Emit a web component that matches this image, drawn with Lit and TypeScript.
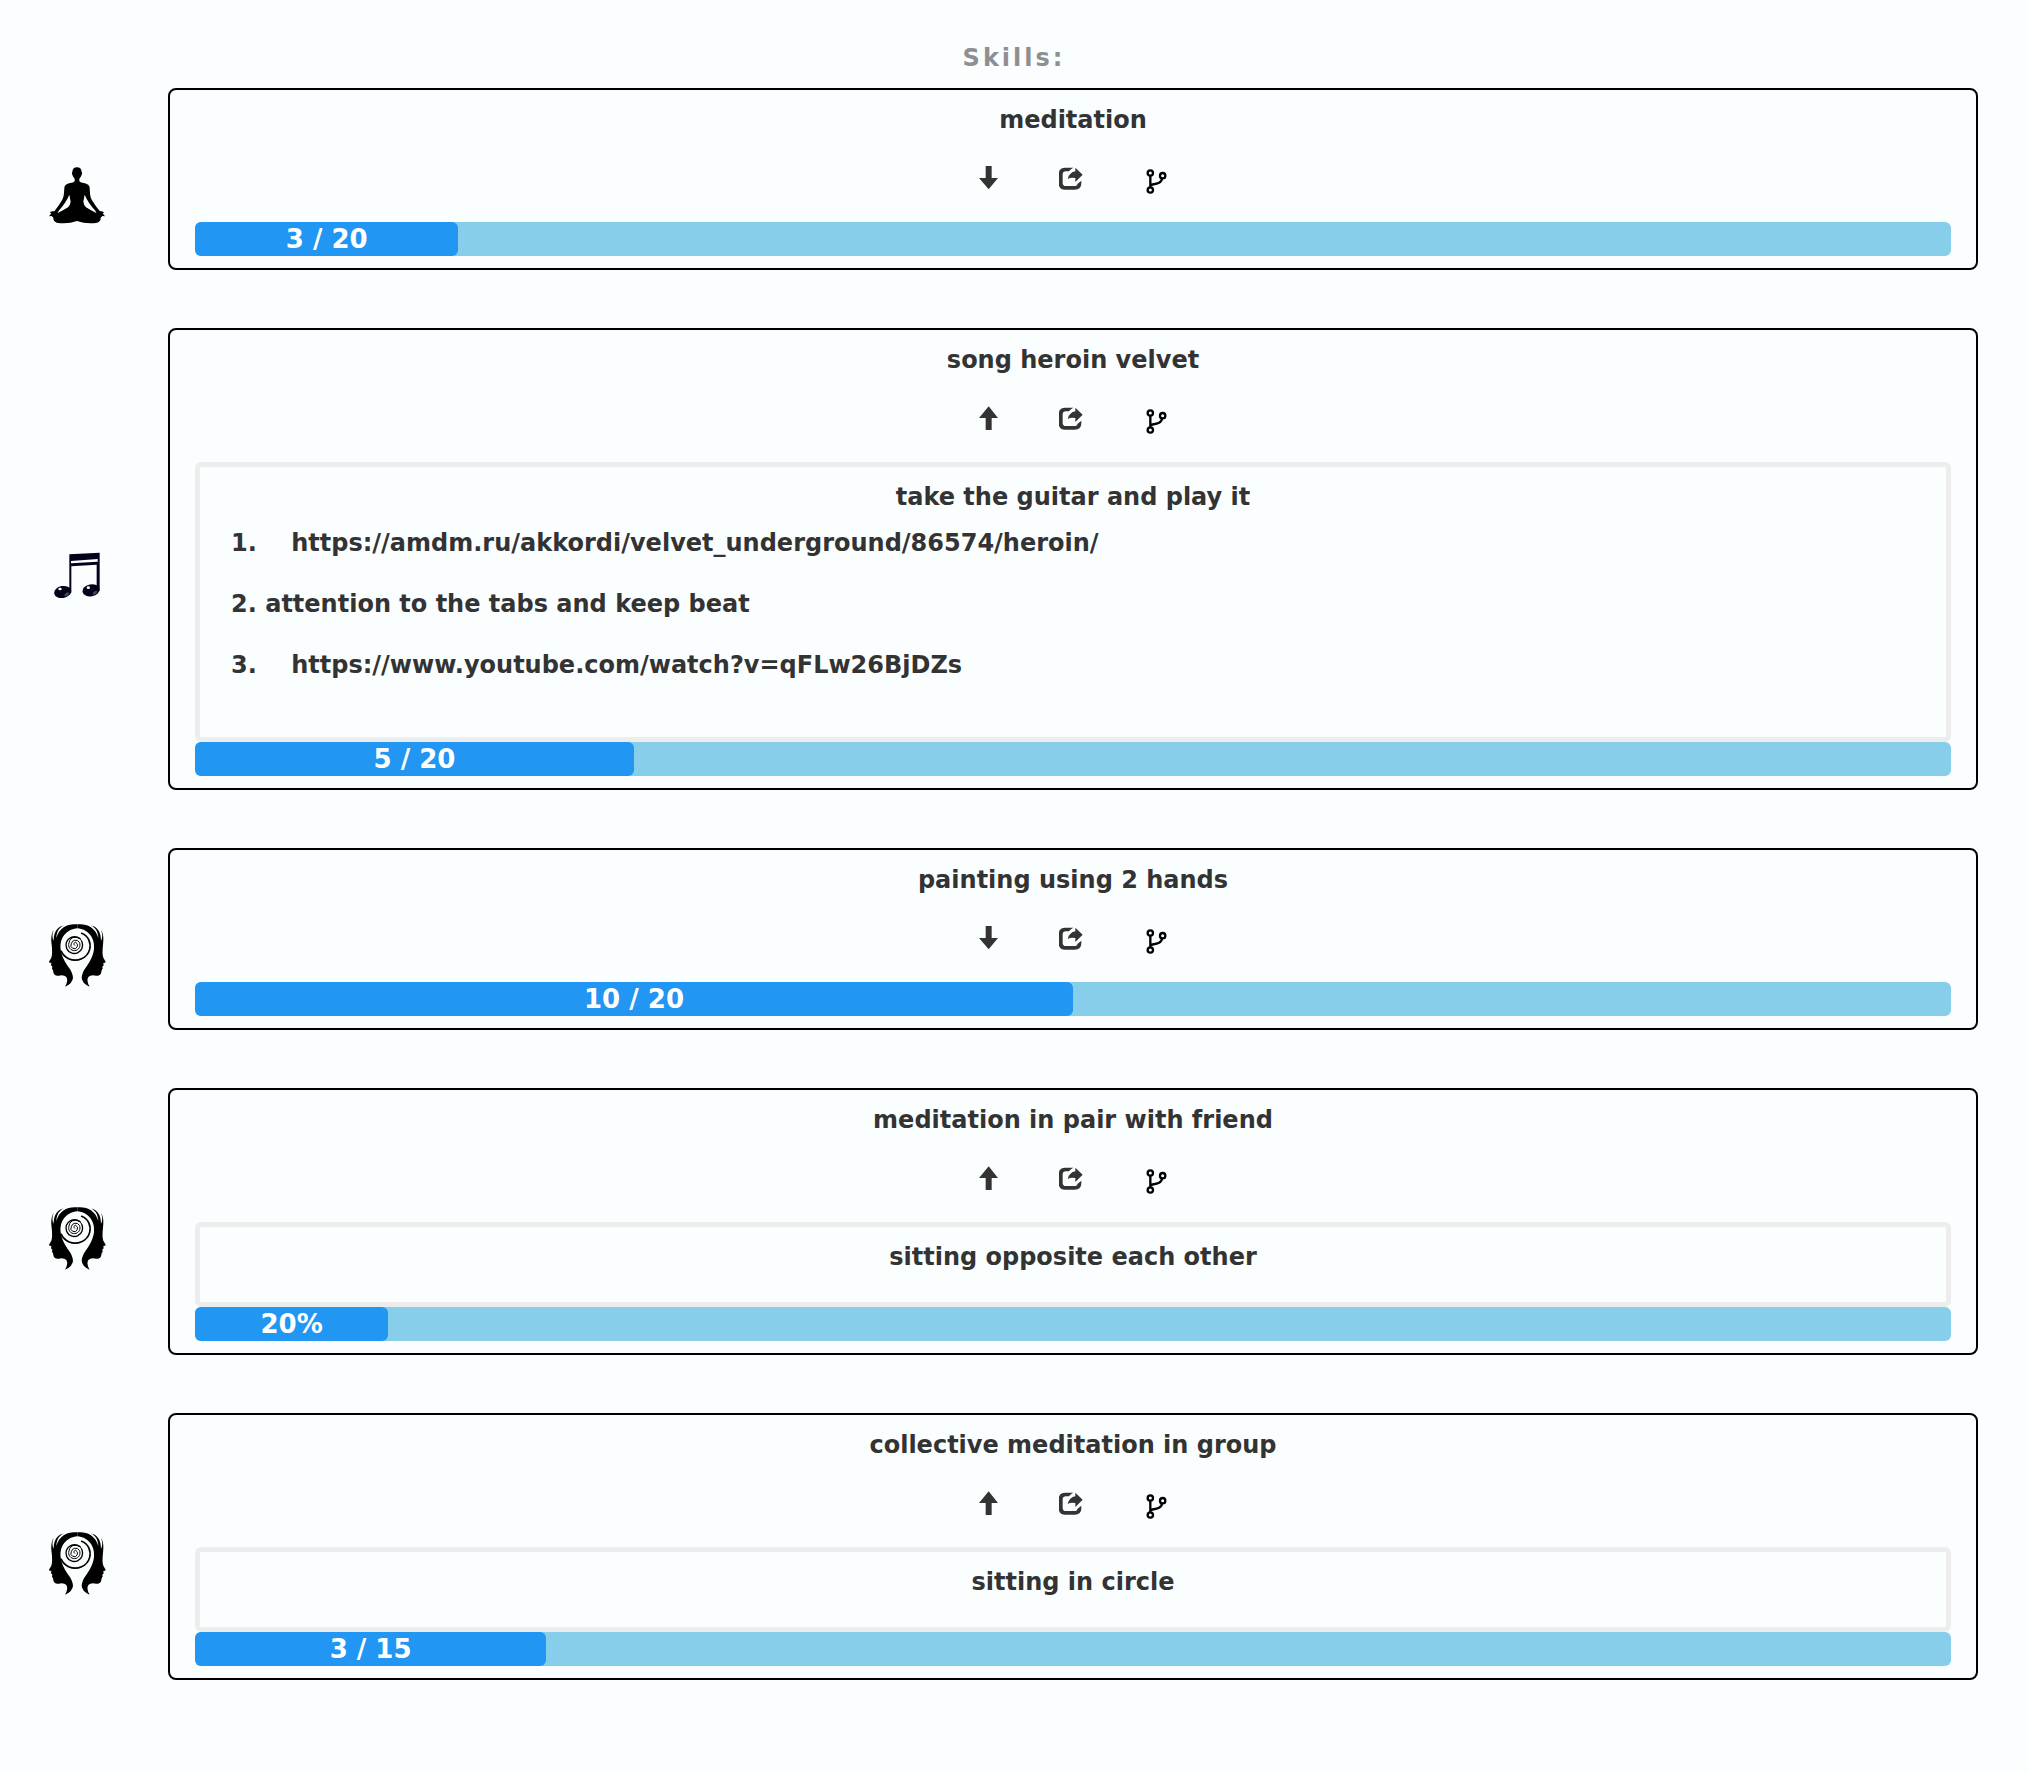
import { LitElement, html, css, svg, nothing } from 'lit';
import { customElement, property } from 'lit/decorators.js';

type Picture = 'lotus' | 'music' | 'mind';

interface Step {
  text: string;
  link?: boolean;
}

interface Skill {
  name: string;
  picture: Picture;
  progress: string;
  percent: number;
  note?: string;
  steps?: Step[];
}

const SKILLS: Skill[] = [
  { name: 'meditation', picture: 'lotus', progress: '3 / 20', percent: 15 },
  {
    name: 'song heroin velvet',
    picture: 'music',
    progress: '5 / 20',
    percent: 25,
    note: 'take the guitar and play it',
    steps: [
      { text: 'https://amdm.ru/akkordi/velvet_underground/86574/heroin/', link: true },
      { text: 'attention to the tabs and keep beat' },
      { text: 'https://www.youtube.com/watch?v=qFLw26BjDZs', link: true },
    ],
  },
  { name: 'painting using 2 hands', picture: 'mind', progress: '10 / 20', percent: 50 },
  {
    name: 'meditation in pair with friend',
    picture: 'mind',
    progress: '20%',
    percent: 11,
    note: 'sitting opposite each other',
  },
  {
    name: 'collective meditation in group',
    picture: 'mind',
    progress: '3 / 15',
    percent: 20,
    note: 'sitting in circle',
  },
];

const profile = svg`
  <path d="M112 43C84 40 58 52 49 84C50 64 58 52 72 46C52 50 41 66 41 92C36 84 36 72 41 60C33 72 33 88 35 104
    C37 122 37 136 34 143L27 155Q27 159 34 159L33 166L37 170L36 176Q40 180 40 186Q42 199 56 197Q72 194 79 201
    Q86 212 75 230Q98 220 99 203Q98 188 86 172C76 158 65 140 62 118C58 84 80 57 112 55Z"/>`;

const PICTURES = {
  lotus: svg`
    <path d="M111 52C120 52 125 58 125 66Q128 69 125 74Q122 83 118 86V93Q120 98 132 99Q148 102 149 113
      C150 130 150 142 157 152Q168 170 179 183Q189 183 193 188Q189 188 188 190L195 199L187 198L182 203
      Q183 213 172 218Q140 223 111 213Q82 223 50 218Q39 213 40 203L35 198L27 199L34 190Q32 188 29 187
      Q35 182 43 184Q54 170 65 152C72 142 72 130 73 113Q74 102 90 99Q102 98 104 93V86Q100 83 97 74
      Q94 69 97 66C97 58 102 52 111 52Z"/>
    <path fill="#fafeff" d="M88 134L92 155Q91 165 84 172Q68 182 52 190Q54 187 56 182Q78 158 88 134Z
      M134 134L130 155Q131 165 138 172Q154 182 170 190Q168 187 166 182Q144 158 134 134Z"/>`,
  music: svg`
    <g transform="translate(0 30)" fill="#02021a">
      <path d="M88 43L179 38V152H170V74L94 79V158H88Z"/>
      <path fill="#fafeff" d="M93 63L173 57V65L93 70Z"/>
      <ellipse cx="68" cy="156" rx="26" ry="18" transform="rotate(-10 68 156)"/>
      <ellipse cx="153" cy="151" rx="26" ry="18" transform="rotate(-10 153 151)"/>
      <g fill="#fff">
        <ellipse cx="60" cy="147" rx="5" ry="4"/>
        <ellipse cx="145" cy="143" rx="5" ry="4"/>
      </g>
      <g fill="#454c58">
        <ellipse cx="80" cy="163" rx="8" ry="4" transform="rotate(-35 80 163)"/>
        <ellipse cx="165" cy="158" rx="8" ry="4" transform="rotate(-35 165 158)"/>
      </g>
    </g>`,
  mind: svg`
    ${profile}
    <g transform="matrix(-1 0 0 1 224 0)">${profile}</g>
    <circle cx="107" cy="105" r="44" fill="#fafeff"/>
    <path fill="none" stroke="#000" stroke-width="3" stroke-linecap="round"
      d="M104 106A5 5 0 0 1 107 97A10 10 0 1 1 94 101A13 13 0 0 1 118 97A17 17 0 1 1 87 99A20 20 0 0 1 126 96"/>
    <path fill="none" stroke="#000" stroke-width="4" stroke-linecap="round"
      d="M126 96A25 25 0 1 1 92 83Q106 76 120 86"/>
    <path fill="none" stroke="#000" stroke-width="5" stroke-linecap="round"
      d="M125 70C145 78 154 98 149 118C142 144 112 158 86 146C76 141 68 134 64 124"/>`,
};

const ARROW_DOWN = svg`<path d="M20 0H38V36H57L29 70L0 36H20Z"/>`;
const ARROW_UP = svg`<path d="M20 72H38V36H57L29 1L0 36H20Z"/>`;

@customElement('skill-card')
class SkillCard extends LitElement {
  @property({ attribute: false }) skill!: Skill;

  static styles = css`
    :host {
      display: flex;
      align-items: center;
    }
    .picture {
      flex: none;
      width: 80px;
      height: 90px;
      margin: 32px 48px 0 40px;
    }
    .card {
      flex: 1;
      min-width: 0;
      padding: 12px 25px;
      border: 2px solid #000;
      border-radius: 8px;
    }
    .name,
    .note {
      margin: 0;
      font-size: 24px;
      line-height: 36px;
      text-align: center;
    }
    .actions {
      display: flex;
      justify-content: center;
      gap: 60px;
      padding: 28px 0;
    }
    .action {
      display: block;
      padding: 0;
      border: 0;
      background: none;
      color: #333;
      cursor: pointer;
    }
    .action svg {
      display: block;
      height: 28px;
      fill: currentColor;
    }
    .narrow {
      width: 20px;
    }
    .wide {
      width: 24px;
    }
    .action .fork {
      fill: none;
      stroke: #000;
      stroke-width: 7px;
    }
    .details {
      padding: 12px 31px 27px;
      border: 5px solid #ededed;
      border-radius: 6px;
    }
    .steps {
      display: grid;
      gap: 25px;
      margin: 10px 0 27px;
      padding: 0;
      list-style: none;
      line-height: 36px;
      overflow-wrap: anywhere;
    }
    .link {
      margin-left: 26px;
      color: inherit;
      text-decoration: none;
    }
    .track {
      border-radius: 6px;
      background: #87ceeb;
    }
    .fill {
      border-radius: 6px;
      background: #2196f3;
      color: #fff;
      font-size: 26px;
      line-height: 34px;
      text-align: center;
      white-space: nowrap;
    }
  `;

  render() {
    const s = this.skill;
    return html`
      <svg class="picture" viewBox="0 0 240 270" aria-hidden="true">${PICTURES[s.picture]}</svg>
      <section class="card">
        <h2 class="name">${s.name}</h2>
        <div class="actions">
          <button class="action" type="button" aria-label=${s.note ? 'Collapse' : 'Expand'}>
            <svg class="narrow" viewBox="0 0 60 84">${s.note ? ARROW_UP : ARROW_DOWN}</svg>
          </button>
          <button class="action" type="button" aria-label="Share">
            <svg class="wide" viewBox="0 0 72 84">
              <path d="M43 5H19Q-1 5 -1 25V51Q-1 71 19 71H47Q67 71 67 52V44L55 54Q55 60 46 60H21Q11 60 11 50V26Q11 16 21 16H30Q35 9 43 5Z" />
              <path d="M49 5L71 26L49 48V36Q36 33 26 39Q31 19 49 16Z" />
            </svg>
          </button>
          <button class="action" type="button" aria-label="Branch">
            <svg class="wide fork" viewBox="0 0 72 84">
              <circle cx="22" cy="21" r="8" />
              <circle cx="59" cy="29" r="8" />
              <circle cx="22" cy="72" r="8" />
              <path d="M22 29V64M22 57C40 53 56 52 57 37" />
            </svg>
          </button>
        </div>
        ${s.note
          ? html`<div class="details">
              <p class="note">${s.note}</p>
              ${s.steps
                ? html`<ul class="steps">
                    ${s.steps.map(
                      (step, i) => html`<li>${i + 1}. ${step.link
                        ? html`<a class="link" href=${step.text}>${step.text}</a>`
                        : step.text}</li>`,
                    )}
                  </ul>`
                : nothing}
            </div>`
          : nothing}
        <div class="track" role="progressbar" aria-label=${s.name} aria-valuenow=${s.percent}>
          <div class="fill" style="width:${s.percent}%">${s.progress}</div>
        </div>
      </section>
    `;
  }
}

@customElement('app-root')
class AppRoot extends LitElement {
  static styles = css`
    :host {
      display: block;
      box-sizing: border-box;
      min-height: 100vh;
      padding: 40px 0 58px;
      background: #fafeff;
      color: #333;
      font: bold 24px 'DejaVu Sans', Verdana, sans-serif;
    }
    .heading {
      margin: 0 0 12px;
      color: #8f8f8f;
      font-size: 24px;
      line-height: 36px;
      letter-spacing: 3px;
      text-align: center;
    }
    .list {
      display: grid;
      grid-template-columns: minmax(0, 1fr);
      gap: 58px;
      padding-right: 50px;
    }
  `;

  render() {
    return html`
      <h1 class="heading">Skills:</h1>
      <main class="list">
        ${SKILLS.map((skill) => html`<skill-card .skill=${skill}></skill-card>`)}
      </main>
    `;
  }
}
